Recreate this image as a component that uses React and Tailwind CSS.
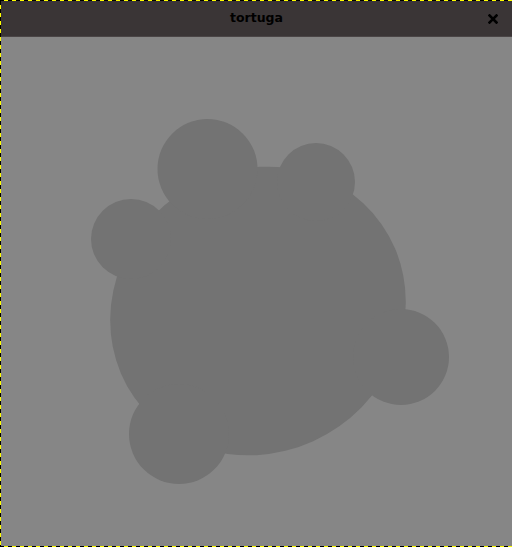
export default function App() {
  return (
    <div className="w-[512px] h-[547px] py-px bg-[repeating-linear-gradient(90deg,#000_0_4px,#ff0_4px_8px)] overflow-hidden font-['DejaVu_Sans',sans-serif]">
      <div className="h-full pl-px bg-[repeating-linear-gradient(180deg,#000_0_4px,#ff0_4px_8px)] flex">
        <div className="flex-1 flex flex-col bg-[#868686]">
          <div className="h-[36px] bg-[#3a3536] border-b border-[#4a4546] relative flex items-center justify-center shrink-0">
            <span className="text-[12.5px] font-bold text-black">tortuga</span>
            <svg className="absolute right-[14px] top-[13px]" width="10" height="10" viewBox="0 0 10 10">
              <path d="M1.5 1.5 L8.5 8.5 M8.5 1.5 L1.5 8.5" stroke="#000" strokeWidth="2.6" strokeLinecap="square" />
            </svg>
          </div>
          <div className="flex-1 relative">
            <svg width="511" height="509" viewBox="1 37 511 509" className="block">
              <g fill="#737373">
                <ellipse cx="258" cy="311" rx="151" ry="141" transform="rotate(-35 258 311)" />
                <circle cx="207.5" cy="169" r="50" />
                <circle cx="316" cy="182" r="39" />
                <circle cx="131" cy="239" r="40" />
                <circle cx="401" cy="357" r="48" />
                <circle cx="179" cy="434" r="50" />
              </g>
            </svg>
          </div>
        </div>
      </div>
    </div>
  );
}
